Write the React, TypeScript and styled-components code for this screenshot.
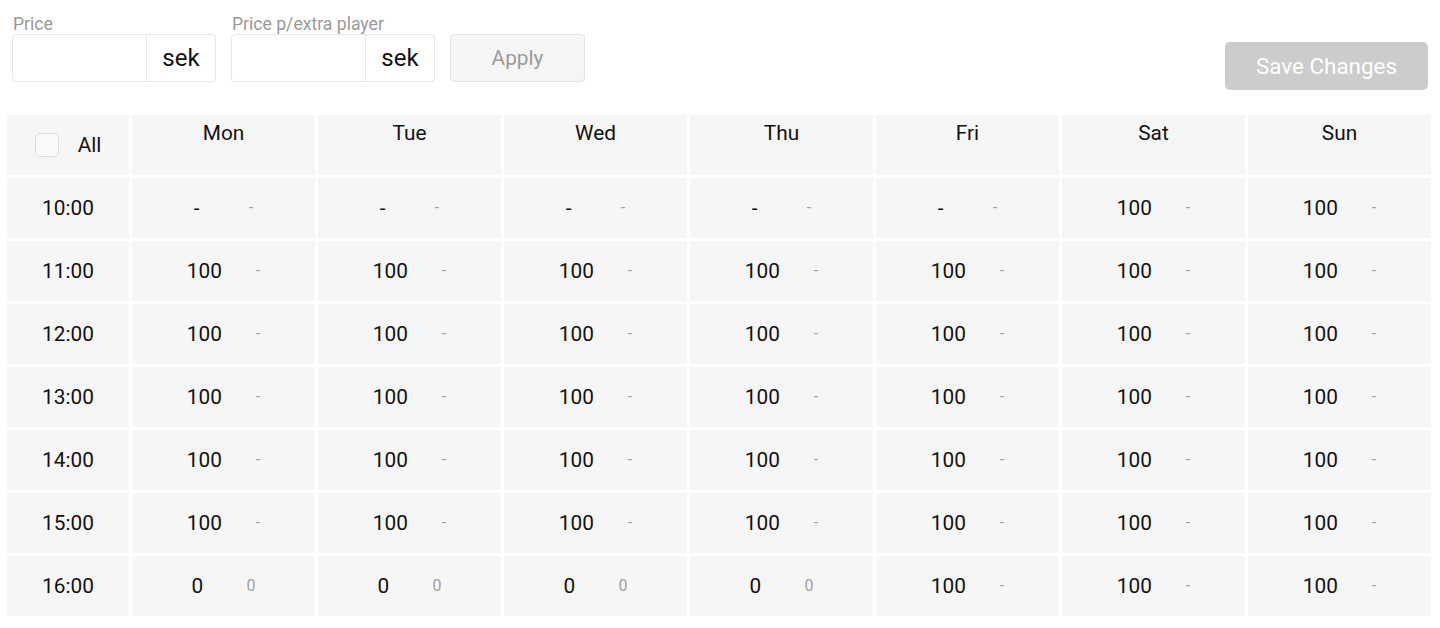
import React from 'react';
import styled, { createGlobalStyle } from 'styled-components';

const GlobalStyle = createGlobalStyle`
  html {
    font-size: 16px;
  }
  body {
    margin: 0;
    background: #fff;
    font-family: Roboto, 'Noto Sans', Arial, sans-serif;
    color: #111;
  }
`;

const Page = styled.div`
  padding: 0 9px 0 7px;
`;

const Toolbar = styled.div`
  display: flex;
  align-items: flex-start;
  gap: 15px;
  padding: 14px 3px 0 5px;
`;

const Field = styled.div`
  display: flex;
  flex-direction: column;
`;

const Label = styled.label`
  font-size: 1.1rem;
  line-height: 20px;
  color: #9a9a9a;
  padding-left: 1px;
`;

const InputGroup = styled.div`
  display: flex;
  height: 48px;
  width: 204px;
  box-sizing: border-box;
  border: 1px solid #e6e6e6;
  border-radius: 4px;
  background: #fff;
`;

const PriceInput = styled.input`
  width: 134px;
  border: none;
  border-right: 1px solid #e6e6e6;
  border-radius: 4px 0 0 4px;
  outline: none;
  padding: 0 10px;
  box-sizing: border-box;
  font: inherit;
  font-size: 1.3rem;
`;

const Addon = styled.span`
  flex: 1;
  display: flex;
  align-items: center;
  justify-content: center;
  font-size: 1.5rem;
  color: #111;
`;

const ApplyButton = styled.button`
  margin-top: 20px;
  width: 135px;
  height: 48px;
  border: 1px solid #e2e2e2;
  border-radius: 4px;
  background: #f5f5f5;
  color: #9a9a9a;
  font-family: inherit;
  font-size: 1.3rem;
`;

const SaveButton = styled.button`
  margin-left: auto;
  margin-top: 28px;
  width: 203px;
  height: 48px;
  border: none;
  border-radius: 5px;
  background: #cccccc;
  color: #fff;
  font-family: inherit;
  font-size: 1.4rem;
`;

const Grid = styled.div`
  margin-top: 25px;
  display: grid;
  grid-template-columns: 122px repeat(7, 183px);
  grid-auto-rows: 60px;
  gap: 3px;
`;

const Cell = styled.div<{ $head?: boolean }>`
  background: #f6f6f6;
  display: flex;
  justify-content: center;
  align-items: ${({ $head }) => ($head ? 'flex-start' : 'center')};
  padding-top: ${({ $head }) => ($head ? '6px' : '0')};
  box-sizing: border-box;
  font-size: 1.3rem;
  line-height: 24px;
  color: #111;
`;

const AllCell = styled(Cell)`
  align-items: center;
  gap: 19px;
  padding-top: 0;
`;

const Checkbox = styled.span`
  width: 24px;
  height: 24px;
  box-sizing: border-box;
  border: 1px solid #dcdce3;
  border-radius: 5px;
  background: #fafafa;
`;

/* price keeps a small minimum box so single chars sit a bit left */
const Main = styled.span`
  display: inline-block;
  min-width: 21px;
  text-align: left;
`;

const Extra = styled.span`
  margin-left: 34px;
  font-size: 1rem;
  color: #a0a0a0;
`;

const days = ['Mon', 'Tue', 'Wed', 'Thu', 'Fri', 'Sat', 'Sun'];
const hours = ['10:00', '11:00', '12:00', '13:00', '14:00', '15:00', '16:00'];

const priceFor = (hour: string, day: number): [string, string] => {
  const weekend = day >= 5;
  if (hour === '10:00' && !weekend) return ['-', '-'];
  if (hour === '16:00' && day < 4) return ['0', '0'];
  return ['100', '-'];
};

export default function App() {
  return (
    <Page>
      <GlobalStyle />
      <Toolbar>
        <Field>
          <Label>Price</Label>
          <InputGroup>
            <PriceInput />
            <Addon>sek</Addon>
          </InputGroup>
        </Field>
        <Field>
          <Label>Price p/extra player</Label>
          <InputGroup>
            <PriceInput />
            <Addon>sek</Addon>
          </InputGroup>
        </Field>
        <ApplyButton>Apply</ApplyButton>
        <SaveButton>Save Changes</SaveButton>
      </Toolbar>

      <Grid>
        <AllCell $head>
          <Checkbox />
          <span>All</span>
        </AllCell>
        {days.map((d) => (
          <Cell $head key={d}>
            {d}
          </Cell>
        ))}
        {hours.map((h) => (
          <React.Fragment key={h}>
            <Cell>{h}</Cell>
            {days.map((d, i) => {
              const [price, extra] = priceFor(h, i);
              return (
                <Cell key={d}>
                  <Main>{price}</Main>
                  <Extra>{extra}</Extra>
                </Cell>
              );
            })}
          </React.Fragment>
        ))}
      </Grid>
    </Page>
  );
}
